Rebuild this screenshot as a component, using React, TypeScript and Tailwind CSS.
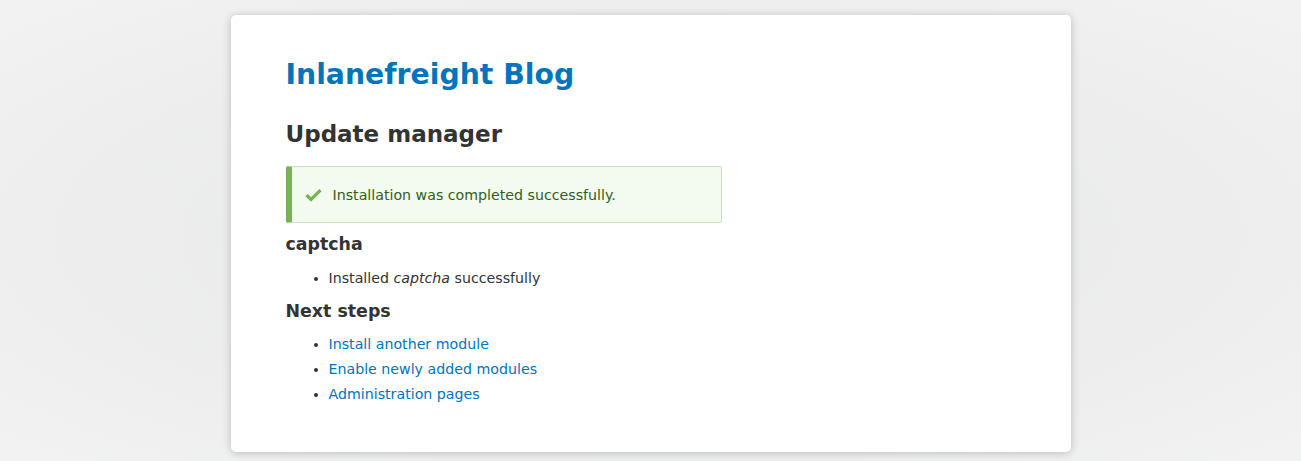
import React from 'react';

const nextSteps = ['Install another module', 'Enable newly added modules', 'Administration pages'];

export default function App() {
    return (
        <div className="min-h-screen bg-[#eeefef] bg-[radial-gradient(hsl(203,2%,90%),hsl(203,2%,95%))] pt-[15px] pb-[15px] font-['DejaVu_Sans',sans-serif]">
            <main className="mx-auto w-[840px] rounded-[5px] bg-white pl-[55px] pr-[55px] pt-[43px] pb-[45px] shadow-[0_1px_8px_rgba(0,0,0,0.22)]">
                <h1 className="text-[28.3px] leading-[34px] font-bold text-[#0074bd]">Inlanefreight Blog</h1>

                <h2 className="mt-[28px] text-[23px] leading-[28px] font-bold text-[#333]">Update manager</h2>

                {/* Status message */}
                <div className="mt-[18px] flex w-[436px] items-center gap-[11px] rounded-[2px] border border-[#c9e1bd] border-l-[6px] border-l-[#77b259] bg-[#f3faef] py-[17.5px] pl-[13px] text-[14.2px] leading-[20px] text-[#325e1c]">
                    <svg width="17" height="14" viewBox="0 0 17 14" className="shrink-0">
                        <path d="M1.5 7.2 L6 11.5 L15.5 2.2" fill="none" stroke="#77b259" strokeWidth="3.2" strokeLinejoin="miter" />
                    </svg>
                    <span>Installation was completed successfully.</span>
                </div>

                <h3 className="mt-[10px] text-[17.4px] leading-[22px] font-bold text-[#333]">captcha</h3>
                <ul className="mt-[13px] list-disc pl-[43px] text-[14.2px] leading-[20px] text-[#333]">
                    <li>Installed <em>captcha</em> successfully</li>
                </ul>

                <h3 className="mt-[12px] text-[17.4px] leading-[22px] font-bold text-[#333]">Next steps</h3>
                <ul className="mt-[10px] list-disc pl-[43px] text-[14.2px] leading-[25px] text-[#333]">
                    {nextSteps.map(step => (
                        <li key={step}>
                            <a href="#" className="text-[#0074bd] no-underline">{step}</a>
                        </li>
                    ))}
                </ul>
            </main>
        </div>
    );
}
